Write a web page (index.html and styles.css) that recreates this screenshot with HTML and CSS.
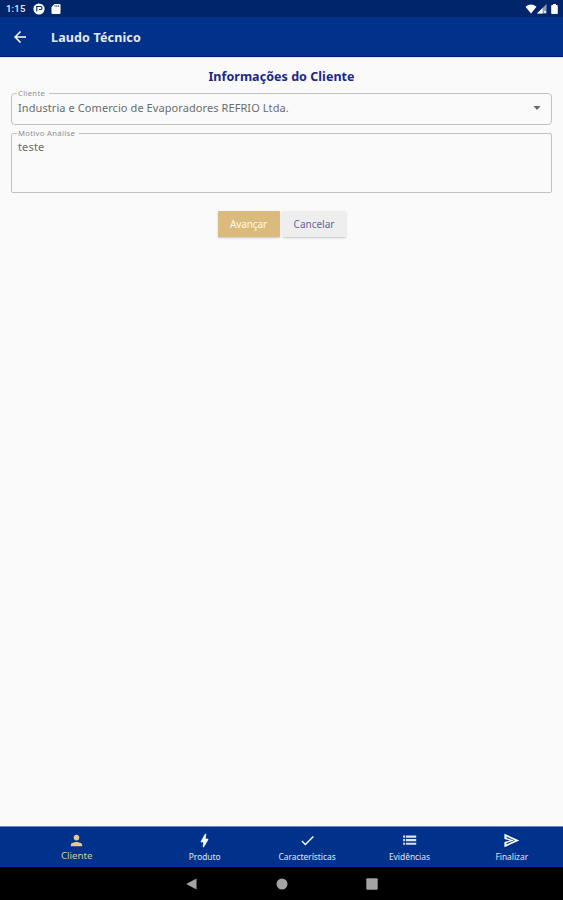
FILE: index.html
```html
<!DOCTYPE html>
<html lang="pt-BR">
<head>
<meta charset="utf-8">
<title>Laudo Técnico</title>
<link rel="stylesheet" href="styles.css">
</head>
<body>
<div class="app">
  <div class="status">
    <span class="time">1:15</span>
    <svg class="app-dot" width="12" height="12" viewBox="0 0 12 12"><circle cx="6" cy="6" r="5.6" fill="#fff"/><path d="M3.800 8.500V3.500H8a1.600 1.600 0 0 1 0 3H6" fill="none" stroke="#00256b" stroke-width="1.1"/></svg>
    <svg class="sd" width="10" height="10" viewBox="0 0 10 10"><path d="M3.5 0H8.5Q9.5 0 9.5 1V9Q9.5 10 8.5 10H1.5Q.5 10 .5 9V3Z" fill="#fff"/><path d="M4 1.2v1.8M5.7 1.2v1.8M7.4 1.2v1.8" stroke="#00256b" stroke-width=".7"/></svg>
    <span class="grow"></span>
    <svg width="12" height="10" viewBox="0 0 12 10"><path d="M.5 2.8Q6-1.8 11.5 2.8L6 9.6Z" fill="#fff"/></svg>
    <svg class="signal" width="10" height="10" viewBox="0 0 10 10"><path d="M0 9.6L9.5 0V9.6Z" fill="#fff" opacity=".55"/><path d="M0 9.6L5.6 4V9.6Z" fill="#fff"/><path d="M7 7l2 2M9 7L7 9" stroke="#fff" stroke-width=".8"/></svg>
    <svg class="battery" width="7" height="10" viewBox="0 0 7 10"><path d="M2 0H5V1H6Q6.8 1 6.8 2V9Q6.8 10 6 10H1Q.2 10 .2 9V2Q.2 1 1 1H2Z" fill="#fff"/></svg>
  </div>
  <header class="bar">
    <svg width="18" height="18" viewBox="0 0 24 24"><path d="M20 11H7.83l5.59-5.59L12 4l-8 8 8 8 1.41-1.41L7.83 13H20v-2z" fill="#fff"/></svg>
    <h1>Laudo Técnico</h1>
  </header>
  <main>
    <h2>Informações do Cliente</h2>
    <fieldset class="field select">
      <legend>Cliente</legend>
      <span class="value">Industria e Comercio de Evaporadores REFRIO Ltda.</span>
      <svg class="caret" width="8" height="4" viewBox="0 0 8 4"><path d="M.5 0H7.500L4 4Z" fill="#666"/></svg>
    </fieldset>
    <fieldset class="field area">
      <legend>Motivo Análise</legend>
      <span class="value">teste</span>
    </fieldset>
    <div class="actions">
      <button class="btn primary">Avançar</button>
      <button class="btn">Cancelar</button>
    </div>
  </main>
  <nav class="tabs">
    <div class="tab active"><svg width="17" height="17" viewBox="0 0 24 24"><path d="M12 12c2.21 0 4-1.79 4-4s-1.790-4-4-4-4 1.790-4 4 1.790 4 4 4zm0 2c-2.670 0-8 1.340-8 4v2h16v-2c0-2.660-5.330-4-8-4z"/></svg><span>Cliente</span></div>
    <div class="tab"><svg width="17" height="17" viewBox="0 0 24 24"><path d="M11 21h-1l1-7H7.500c-.88 0-.33-.75-.31-.78C8.480 10.940 10.420 7.540 13.010 3h1l-1 7h3.510c.4 0 .62.190.4.660C12.970 17.550 11 21 11 21z" stroke="#fff"/></svg><span>Produto</span></div>
    <div class="tab"><svg width="17" height="17" viewBox="0 0 24 24"><path d="M9 16.170L4.830 12l-1.420 1.410L9 19 21 7l-1.410-1.410z"/></svg><span>Características</span></div>
    <div class="tab evid"><svg width="17" height="17" viewBox="0 0 24 24"><path d="M3 5h2.800v3H3zM7 5h14.500v3H7zM3 10h2.800v3H3zM7 10h14.500v3H7zM3 15h2.800v3H3zM7 15h14.500v3H7z"/></svg><span>Evidências</span></div>
    <div class="tab"><svg width="17" height="17" viewBox="0 0 24 24"><path fill-rule="evenodd" d="M2 2.500L23 12 2 21.500V14L10 12 2 10ZM5 6.500v2L15.500 12 5 15.500v2L17 12Z"/></svg><span>Finalizar</span></div>
  </nav>
  <div class="system">
    <svg width="12" height="12" viewBox="0 0 12 12"><path d="M10.500 .5V11.500L.2 6Z"/></svg>
    <svg width="12" height="12" viewBox="0 0 12 12"><circle cx="6" cy="6" r="5.500"/></svg>
    <svg width="12" height="12" viewBox="0 0 12 12"><rect x=".3" y=".3" width="11.400" height="11.400" rx="1"/></svg>
  </div>
</div>
</body>
</html>
```
FILE: styles.css
```css
* { box-sizing: border-box; }
body {
  margin: 0;
  font-family: "Noto Sans", "Open Sans", sans-serif;
  background: #fafafa;
}
svg { display: block; flex: none; }
.app { height: 900px; display: flex; flex-direction: column; }
.status {
  height: 17px;
  padding: 1px 5px 0 6px;
  display: flex;
  align-items: center;
  background: #00256b;
}
.time { width: 27px; color: #e9edf7; font: 500 9.5px/16px Roboto, sans-serif; letter-spacing: .2px; }
.sd { margin-left: 6px; }
.grow { flex: 1; }
.battery { margin-left: 4px; }
.bar {
  height: 40px;
  padding-left: 11px;
  display: flex;
  align-items: center;
  gap: 22px;
  background: #00328c;
  border-bottom: 1px solid #001c70;
  box-shadow: 0 1px 1px #e4e0ee;
}
.status .signal { margin-left: 0; }
h1 { margin: 2px 0 0; color: #e6eaf6; font-size: 12.5px; line-height: 18px; font-weight: 700; letter-spacing: .15px; }
main { flex: 1; padding: 11px 11px 0; }
h2 {
  margin: 0 0 4px;
  height: 17px;
  color: #1c2888;
  font-size: 12.5px;
  line-height: 17px;
  font-weight: 700;
  letter-spacing: .05px;
  text-align: center;
}
.field {
  margin: 0;
  min-width: 0;
  padding: 0 10px 0 5px;
  border: 1px solid #c2c2c2;
  border-radius: 4px;
  color: #6c6c6c;
}
legend {
  height: 8px;
  padding: 0 4px 0 1px;
  color: #8f8f8f;
  font-size: 7.7px;
  line-height: 9px;
  letter-spacing: .3px;
}
.value { font-size: 11px; line-height: 15px; padding-left: 1px; letter-spacing: .08px; }
.select { height: 36px; display: flex; justify-content: space-between; }
.select .value { margin-top: 3px; }
.caret { margin-top: 9px; }
.area { height: 64px; margin-top: 4px; border-radius: 2px; }
.area .value { display: block; padding-top: 2px; letter-spacing: .15px; }
.actions { margin-top: 18px; display: flex; justify-content: center; gap: 3px; }
.btn {
  width: 63px;
  height: 26px;
  padding: 0;
  border: 0;
  border-radius: 1px;
  background: #eee;
  color: #65659f;
  font: 10px/26px "Noto Sans", sans-serif;
  box-shadow: 0 1px 2px #c4c4c4;
}
.primary { width: 62px; background: #dbbb7d; color: #fff8e8; letter-spacing: -.1px; }
.tabs { height: 41px; display: flex; background: #00328c; border-top: 1px solid #6e89c8; }
.tab {
  flex: 1;
  padding-top: 5px;
  display: flex;
  flex-direction: column;
  align-items: center;
  color: #e0e4f3;
  fill: #fff;
  font-size: 8.4px;
  line-height: 13px;
}
.tab span { margin-top: 1px; }
.evid { fill: #dde2f2; }
.active { flex: 1.5; color: #d6c7a8; fill: #e8c88f; font-size: 9.7px; }
.active span { margin-top: 0; }
.system { height: 33px; display: flex; align-items: center; justify-content: center; gap: 78px; background: #000; fill: #a3a3a3; }
```
